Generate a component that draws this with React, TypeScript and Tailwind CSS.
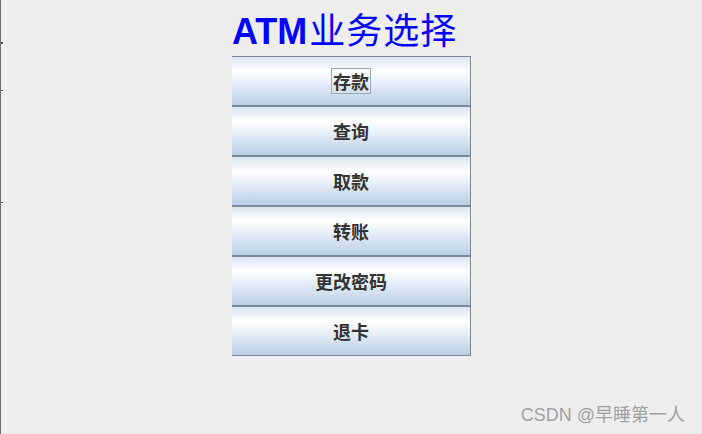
import React from "react";

const items = ["存款", "查询", "取款", "转账", "更改密码", "退卡"];

export default function App() {
  return (
    <div className="relative w-[702px] h-[434px] overflow-hidden bg-[#eeeeee] border-l border-[#6e6e6e]">
      <span className="absolute left-0 top-[42px] w-[2px] h-[2px] bg-[#555]" />
      <span className="absolute left-0 top-[90px] w-[2px] h-[1px] bg-[#555]" />
      <span className="absolute left-0 top-[202px] w-[2px] h-[1px] bg-[#555]" />
      <div className="ml-[231px] w-[239px] flex flex-col">
        <div className="h-[56px] pt-[8px] whitespace-nowrap text-[#0000ff] leading-[40px]">
          <span className="font-bold text-[36px]" style={{ fontFamily: '"Liberation Sans", Arial, sans-serif' }}>ATM</span>
          <span className="font-normal text-[36px] tracking-[1px] pl-[2px]" style={{ fontFamily: '"Noto Sans CJK SC", sans-serif' }}>业务选择</span>
        </div>
        {items.map((t, i) => (
          <div
            key={t}
            className="h-[50px] flex items-center justify-center border-t border-b border-r border-[#7a8a99] bg-[linear-gradient(to_bottom,#dae5f1_0%,#ffffff_30%,#e6eef7_55%,#b9cfe5_100%)]"
          >
            <span
              className={
                "text-[18px] leading-[24px] font-bold text-[#333333] px-[1px] " +
                (i === 0 ? "border border-[#99aabb]" : "border border-transparent")
              }
              style={{ fontFamily: '"Noto Sans CJK SC", sans-serif' }}
            >
              {t}
            </span>
          </div>
        ))}
      </div>
      <div
        className="absolute right-[17px] top-[402px] text-[18px] leading-[26px] text-[#a0a0a0] whitespace-nowrap"
        style={{ fontFamily: '"Liberation Sans", "Noto Sans CJK SC", sans-serif' }}
      >
        CSDN @早睡第一人
      </div>
    </div>
  );
}
